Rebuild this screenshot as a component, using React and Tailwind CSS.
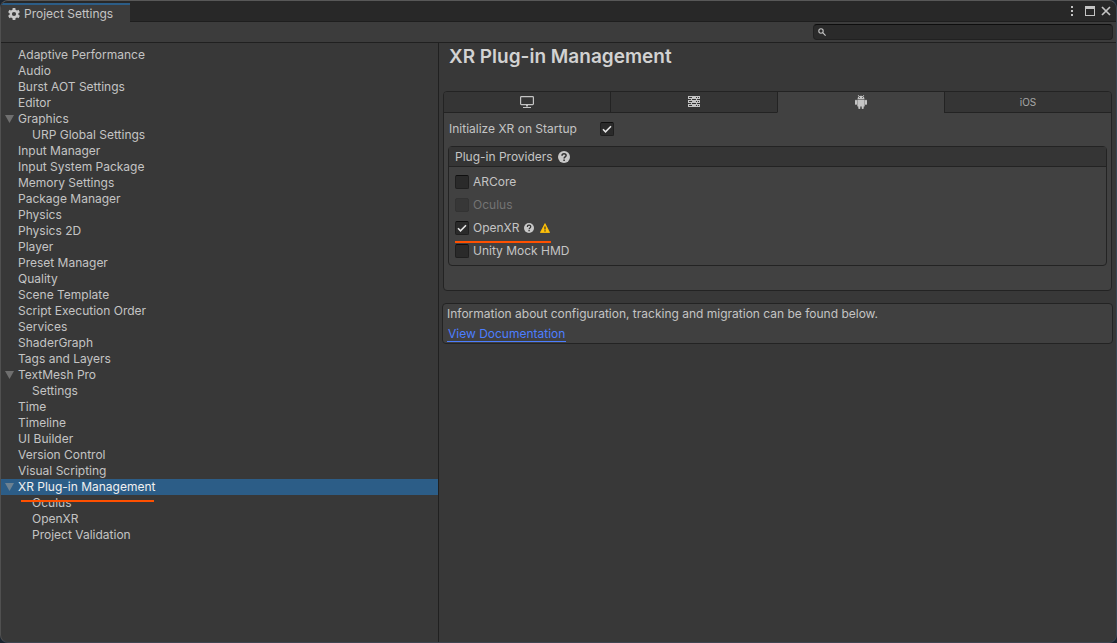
import { useState } from 'react';

const SECTIONS = [
  { name: 'Adaptive Performance' },
  { name: 'Audio' },
  { name: 'Burst AOT Settings' },
  { name: 'Editor' },
  { name: 'Graphics', children: ['URP Global Settings'] },
  { name: 'Input Manager' },
  { name: 'Input System Package' },
  { name: 'Memory Settings' },
  { name: 'Package Manager' },
  { name: 'Physics' },
  { name: 'Physics 2D' },
  { name: 'Player' },
  { name: 'Preset Manager' },
  { name: 'Quality' },
  { name: 'Scene Template' },
  { name: 'Script Execution Order' },
  { name: 'Services' },
  { name: 'ShaderGraph' },
  { name: 'Tags and Layers' },
  { name: 'TextMesh Pro', children: ['Settings'] },
  { name: 'Time' },
  { name: 'Timeline' },
  { name: 'UI Builder' },
  { name: 'Version Control' },
  { name: 'Visual Scripting' },
  { name: 'XR Plug-in Management', marked: true, children: ['Oculus', 'OpenXR', 'Project Validation'] },
];

const PROVIDERS = [
  { id: 'arcore', name: 'ARCore' },
  { id: 'oculus', name: 'Oculus', disabled: true },
  { id: 'openxr', name: 'OpenXR', checked: true, help: true, warning: true, marked: true },
  { id: 'mockhmd', name: 'Unity Mock HMD' },
];

function GearIcon() {
  return (
    <svg className="h-3 w-3" viewBox="0 0 12 12" fill="none" aria-hidden="true">
      <circle cx="6" cy="6" r="3.3" stroke="#c8c8c8" strokeWidth="2.4" />
      <g stroke="#c8c8c8" strokeWidth="2.8">
        <path d="M6 0v2M6 10v2" />
        <path d="M6 0v2M6 10v2" transform="rotate(60 6 6)" />
        <path d="M6 0v2M6 10v2" transform="rotate(120 6 6)" />
      </g>
    </svg>
  );
}

function SearchIcon() {
  return (
    <svg className="h-2 w-2 shrink-0" viewBox="0 0 8 8" fill="none" stroke="#c4c4c4" aria-hidden="true">
      <circle cx="3" cy="3" r="2.2" strokeWidth="1.1" />
      <path d="M4.7 4.7L7.6 7.6" strokeWidth="1.2" />
    </svg>
  );
}

function DesktopIcon() {
  return (
    <svg className="h-3 w-3.5" viewBox="0 0 14 12" aria-hidden="true">
      <rect x="0.6" y="0.6" width="12.8" height="8" rx="0.8" fill="none" stroke="#c4c4c4" strokeWidth="1.2" />
      <path d="M6 9h2v1.6H6zM3 11h8v1H3z" fill="#c4c4c4" />
    </svg>
  );
}

function ServerIcon() {
  return (
    <svg className="h-3 w-3" viewBox="0 0 12 12" aria-hidden="true">
      <path d="M0 0h12v3H0zM0 4h12v3H0zM0 8h12v3H0zM3 3h1v1H3zM8 3h1v1H8zM3 7h1v1H3zM8 7h1v1H8z" fill="#c4c4c4" />
      <path d="M1 1h3v1H1zM8 1h1v1H8zM10 1h1v1h-1zM1 5h3v1H1zM8 5h1v1H8zM10 5h1v1h-1zM1 9h3v1H1zM8 9h1v1H8zM10 9h1v1h-1z" fill="#353535" />
    </svg>
  );
}

function AndroidIcon() {
  return (
    <svg className="h-3.5 w-3" viewBox="0 0 12 14" fill="#c4c4c4" aria-hidden="true">
      <path d="M3 0l1 1.2M9 0L8 1.2" stroke="#c4c4c4" strokeWidth="0.8" />
      <path d="M2.5 4.200C2.500 1.800 4 .7 6 .7S9.500 1.800 9.500 4.200z" />
      <path d="M2.300 4.700h7.400V11q0 .6-.6.600H2.900q-.6 0-.6-.6z" />
      <rect x="0" y="4.800" width="2" height="5" rx="0.900" />
      <rect x="10" y="4.800" width="2" height="5" rx="0.900" />
      <rect x="3.300" y="10" width="2" height="4" rx="0.800" />
      <rect x="6.700" y="10" width="2" height="4" rx="0.800" />
      <circle cx="4.500" cy="2.600" r="0.500" fill="#414141" />
      <circle cx="7.500" cy="2.600" r="0.500" fill="#414141" />
    </svg>
  );
}

function HelpIcon({ small }) {
  return (
    <svg className={small ? 'h-2.5 w-2.5' : 'h-3 w-3'} viewBox="0 0 12 12" fill="none" aria-hidden="true">
      <circle cx="6" cy="6" r="6" fill="#c8c8c8" />
      <path d="M4 4.700C4 2 8.100 2 8.100 4.500 8.100 5.900 6.100 5.900 6.100 7.500" stroke="#333" strokeWidth="1.500" />
      <path d="M5.300 8.400h1.600V10H5.300z" fill="#333" />
    </svg>
  );
}

function WarningIcon() {
  return (
    <svg className="h-2.5 w-2.5" viewBox="0 0 10 10" aria-hidden="true">
      <path d="M5 .6L9.600 9.500H.4z" fill="#ffc107" stroke="#ffc107" strokeLinejoin="round" strokeWidth="0.800" />
      <path d="M4.400 3.500h1.200v3H4.400zM4.400 7.300h1.200v1.200H4.400z" fill="#333" />
    </svg>
  );
}

function Checkbox({ id, defaultChecked, disabled }) {
  return (
    <span className="grid shrink-0">
      <input
        id={id}
        type="checkbox"
        defaultChecked={defaultChecked}
        disabled={disabled}
        className="peer col-start-1 row-start-1 h-3.5 w-3.5 appearance-none rounded-xs border border-[#1f1f1f] border-t-[#0f0f0f] bg-[#2a2a2a] disabled:border-[#333] disabled:bg-[#373737]"
      />
      <svg
        className="pointer-events-none invisible col-start-1 row-start-1 h-3.5 w-3.5 peer-checked:visible"
        viewBox="0 0 14 14"
        fill="none"
        stroke="#e4e4e4"
        strokeWidth="1.600"
        aria-hidden="true"
      >
        <path d="M3 7.300L5.500 9.800 11 4.300" />
      </svg>
    </span>
  );
}

function TreeRow({ name, nested, expandable, marked, selected, onSelect }) {
  return (
    <div className="relative">
      <button
        type="button"
        onClick={() => onSelect(name)}
        className={`flex h-4 w-full items-center text-left ${selected ? 'bg-[#2c5d87] text-[#f0f0f0]' : ''} ${nested ? 'pl-[31px]' : 'pl-1'}`}
      >
        {!nested && (
          <span className="w-[13px] shrink-0">
            {expandable && (
              <svg className={`h-2 w-[9px] ${selected ? 'fill-[#6d8292]' : 'fill-[#6f6f6f]'}`} viewBox="0 0 9 8" aria-hidden="true">
                <path d="M0 0h9L4.500 8z" />
              </svg>
            )}
          </span>
        )}
        {name}
      </button>
      {marked && <span className="absolute top-[21px] left-5 z-10 h-0.5 w-[133px] bg-[#ff5000]" />}
    </div>
  );
}

function Sidebar() {
  const [selected, setSelected] = useState('XR Plug-in Management');

  return (
    <nav aria-label="Settings" className="w-[438px] shrink-0 border-r border-[#202020] pt-1">
      <ul>
        {SECTIONS.map((section) => (
          <li key={section.name}>
            <TreeRow
              name={section.name}
              expandable={!!section.children}
              marked={section.marked}
              selected={selected === section.name}
              onSelect={setSelected}
            />
            {section.children && (
              <ul>
                {section.children.map((child) => (
                  <li key={child}>
                    <TreeRow nested name={child} selected={selected === child} onSelect={setSelected} />
                  </li>
                ))}
              </ul>
            )}
          </li>
        ))}
      </ul>
    </nav>
  );
}

const PLATFORMS = [
  { id: 'standalone', label: 'Standalone', icon: <DesktopIcon /> },
  { id: 'server', label: 'Dedicated Server', icon: <ServerIcon /> },
  { id: 'android', label: 'Android', icon: <AndroidIcon /> },
  { id: 'ios', label: 'iOS', icon: <span className="text-[10px] text-[#a8a8a8]">iOS</span> },
];

function PlatformTabs() {
  const [active, setActive] = useState('android');

  return (
    <div role="tablist" className="flex h-[21px]">
      {PLATFORMS.map((p) => (
        <button
          key={p.id}
          type="button"
          role="tab"
          aria-label={p.label}
          aria-selected={active === p.id}
          onClick={() => setActive(p.id)}
          className={`flex flex-1 items-center justify-center border-b border-l border-l-[#232323] first:border-l-0 ${
            active === p.id ? 'border-b-[#414141] bg-[#414141]' : 'border-b-[#232323] bg-[#353535]'
          }`}
        >
          {p.icon}
        </button>
      ))}
    </div>
  );
}

export default function App() {
  return (
    <div className="flex min-h-screen flex-col bg-[#1c2530] font-['Inter','Liberation_Sans',sans-serif] text-[12px] leading-4 text-[#c4c4c4]">
      <div className="flex flex-1 flex-col overflow-hidden rounded-lg border border-t-[#585858] border-r-[#3a4653] border-b-[#3f4550] border-l-[#505050] bg-[#383838]">
        {/* Window title bar */}
        <header className="flex h-[21px] justify-between bg-[#282828]">
          <div className="mt-0.5 flex w-[129px] items-center gap-1 border-t-2 border-[#2c5d87] bg-[#3c3c3c] pl-[7px]">
            <GearIcon />
            <h1>Project Settings</h1>
          </div>
          <div className="flex flex-1 items-center justify-end gap-1 border-b border-[#1e1e1e] pr-[5px]">
            <button type="button" aria-label="More options" className="p-1">
              <svg className="h-2.5 w-0.5" viewBox="0 0 2 10" fill="#c4c4c4">
                <path d="M0 0h2v2H0zM0 4h2v2H0zM0 8h2v2H0z" />
              </svg>
            </button>
            <button type="button" aria-label="Maximize" className="pl-1">
              <svg className="h-2.5 w-2.5" viewBox="0 0 10 10" fill="#c4c4c4">
                <path d="M0 0h10v10H0zM1 3v6h8V3z" fillRule="evenodd" />
              </svg>
            </button>
            <button type="button" aria-label="Close" className="pl-0.5">
              <svg className="h-2.5 w-2.5" viewBox="0 0 10 10" stroke="#c4c4c4" strokeWidth="1.700">
                <path d="M1 1l8 8M9 1L1 9" />
              </svg>
            </button>
          </div>
        </header>

        {/* Toolbar */}
        <div className="flex h-[21px] items-center justify-end border-b border-[#202020] bg-[#3c3c3c] pr-[3px]">
          <label className="flex h-4 w-[300px] items-center rounded border border-[#212121] border-t-[#0d0d0d] bg-[#2a2a2a] pl-1">
            <SearchIcon />
            <input type="search" aria-label="Search settings" className="w-full bg-transparent px-1 outline-none" />
          </label>
        </div>

        <div className="flex flex-1">
          <Sidebar />

          <main className="min-w-0 flex-1 px-[3px]">
            <h2 className="h-12 pt-0.5 pl-[7px] text-[19px] leading-6 font-semibold text-[#d2d2d2]">XR Plug-in Management</h2>

            <section className="mx-px min-h-[200px] overflow-hidden rounded border border-[#232323] bg-[#414141]">
              <PlatformTabs />

              <div className="flex h-8 items-center pl-[5px]">
                <label htmlFor="init-xr" className="w-[151px]">
                  Initialize XR on Startup
                </label>
                <Checkbox id="init-xr" defaultChecked />
              </div>

              <fieldset className="mx-1 mt-px rounded border border-[#232323] pb-[3px]">
                <div className="flex h-5 items-center gap-[5px] border-b border-[#232323] bg-[#353535] pl-1.5">
                  <span>Plug-in Providers</span>
                  <HelpIcon />
                </div>
                <ul className="pt-[3px] pl-1.5">
                  {PROVIDERS.map((p) => (
                    <li key={p.id} className="relative flex h-[23px] items-center gap-1">
                      <Checkbox id={p.id} defaultChecked={p.checked} disabled={p.disabled} />
                      <label htmlFor={p.id} className={p.disabled ? 'text-[#747474]' : ''}>
                        {p.name}
                      </label>
                      {p.help && <HelpIcon small />}
                      {p.warning && (
                        <span className="pl-0.5">
                          <WarningIcon />
                        </span>
                      )}
                      {p.marked && <span className="absolute top-[25px] left-0 z-10 h-0.5 w-24 bg-[#ff5000]" />}
                    </li>
                  ))}
                </ul>
              </fieldset>
            </section>

            <section className="mt-3 h-[41px] rounded border border-[#232323] bg-[#404040] pt-0.5 pl-1">
              <p>Information about configuration, tracking and migration can be found below.</p>
              <a href="#documentation" className="mt-1 inline-block h-4 border-b border-[#4c7eff] px-px leading-4 text-[#4c7eff]">
                View Documentation
              </a>
            </section>
          </main>
        </div>
      </div>
    </div>
  );
}
